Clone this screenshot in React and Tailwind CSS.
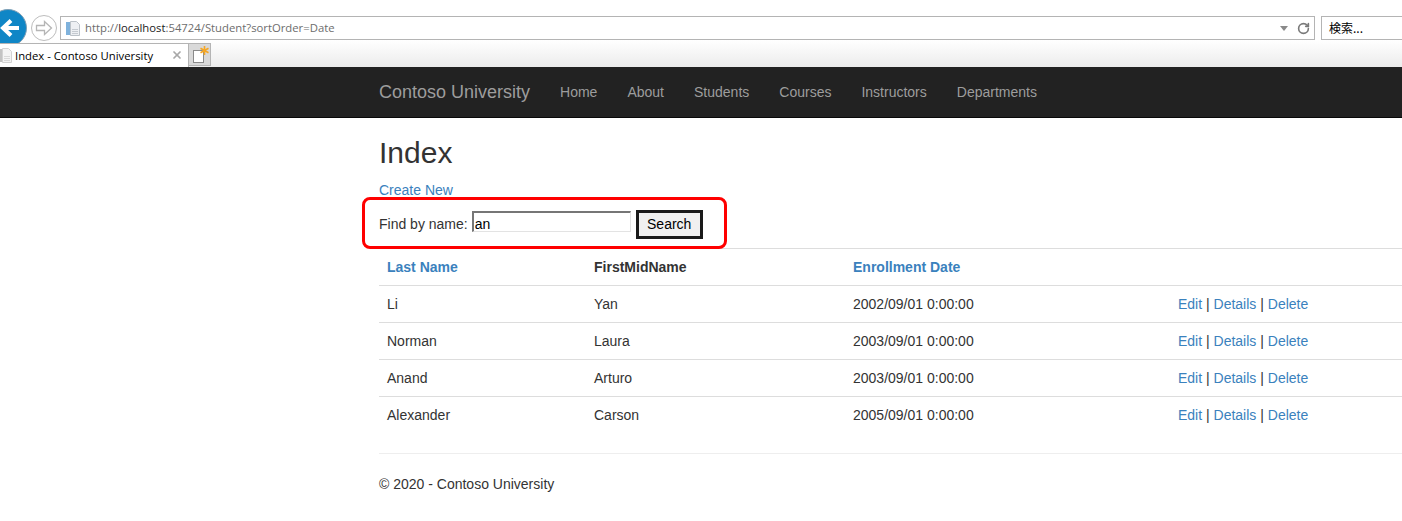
import React from 'react';
import { RotateCw, X } from 'lucide-react';

const students = [
  { last: 'Li', first: 'Yan', date: '2002/09/01 0:00:00' },
  { last: 'Norman', first: 'Laura', date: '2003/09/01 0:00:00' },
  { last: 'Anand', first: 'Arturo', date: '2003/09/01 0:00:00' },
  { last: 'Alexander', first: 'Carson', date: '2005/09/01 0:00:00' },
];

const navItems = ['Home', 'About', 'Students', 'Courses', 'Instructors', 'Departments'];

const PageIcon = ({ className }) => (
  <svg className={className} width="16" height="17" viewBox="0 0 16 17">
    <rect x="1" y="2" width="6" height="13" fill="#7fb2dc" />
    <path d="M5.5 1.5h6l3 3v11h-9z" fill="#eef0f3" stroke="#bcc2c8" />
    <path d="M7 9.5h6M7 11.5h6M7 13.5h6" stroke="#c5cad0" />
  </svg>
);

const Chrome = () => (
  <div className="h-[67px] bg-gradient-to-b from-white from-60% to-[#ececec] relative overflow-hidden">
    <div className="flex items-start h-[43px] pt-[16px]">
      <div className="relative w-[60px] h-6 shrink-0">
        <div className="absolute left-[-11px] top-[-7px] w-[38px] h-[38px] rounded-full bg-[#0f86c6] border border-[#7f9fb5]" />
        <svg className="absolute left-0 top-[2px]" width="20" height="20" viewBox="0 0 20 20" fill="none">
          <path d="M19 10H3M11 2.5 3 10l8 7.5" stroke="#ffffff" strokeWidth="4" />
        </svg>
        <div className="absolute left-[31px] top-[-1px] w-[26px] h-[26px] rounded-full bg-white border border-[#bdbdbd] flex items-center justify-center">
          <svg width="18" height="18" viewBox="0 0 18 18">
            <path d="M1.5 6.5h8V2.5l7 6.5-7 6.5v-4h-8z" fill="#ffffff" stroke="#b5b5b5" strokeWidth="1.3" />
          </svg>
        </div>
      </div>
      <div className="w-[1255px] h-6 border border-[#b4b4b4] bg-white flex items-center pl-1 pr-[4px] shrink-0">
        <PageIcon className="shrink-0" />
        <span className="ml-1 mt-[1px] text-[11.3px] text-[#6d6d6d] font-['Open_Sans','Noto_Sans',sans-serif]">
          http://<span className="text-[#1a1a1a]">localhost</span>:54724/Student?sortOrder=Date
        </span>
        <span className="ml-auto mr-[9px] w-0 h-0 border-x-[4px] border-x-transparent border-t-[5px] border-t-[#8a8a8a]" />
        <RotateCw size={13} strokeWidth={3} className="text-[#7a7a7a]" />
      </div>
      <div className="ml-[6px] flex-1 h-6 border border-[#b4b4b4] border-r-0 bg-white flex items-center pl-[7px] text-[12px] text-black font-['Noto_Sans_CJK_JP',sans-serif]">
        検索...
      </div>
    </div>
    <div className="flex h-[24px] relative">
      <div className="w-[189px] h-[24px] bg-white border border-l-0 border-[#b4b4b4] border-b-0 flex items-center relative">
        <PageIcon className="absolute left-[-3px] top-[3px] grayscale opacity-70" />
        <span className="ml-[15px] mt-[1px] text-[11.3px] text-black font-['Open_Sans','Noto_Sans',sans-serif]">Index - Contoso University</span>
        <X size={12} strokeWidth={3.5} className="text-[#a8a8a8] ml-auto mr-[5px] mb-[2px]" />
      </div>
      <div className="w-[22px] h-[23px] bg-[#d9d9d9] border border-[#b4b4b4] border-l-0 relative">
        <div className="absolute left-[4px] top-[6px] w-[11px] h-[13px] bg-white border border-[#8a8a8a]" />
        <svg className="absolute left-[11px] top-[2px]" width="9" height="9" viewBox="0 0 9 9">
          <path d="M4.5 0v9M0.5 2.2l8 4.6M8.5 2.2l-8 4.6" stroke="#f5a623" strokeWidth="1.6" />
        </svg>
      </div>
    </div>
  </div>
);

const Navbar = () => (
  <nav className="h-[51px] bg-[#222222] border-b border-[#080808] flex pl-[379px]">
    <a className="text-[18px] leading-[50px] text-[#9d9d9d] mr-[15px]">Contoso University</a>
    {navItems.map((item) => (
      <a key={item} className="px-[15px] text-[14px] leading-[50px] text-[#9d9d9d]">{item}</a>
    ))}
  </nav>
);

const LinkCell = ({ children }) => <a className="text-[#3a81bd]">{children}</a>;

const StudentTable = () => (
  <table className="w-[1110px] table-fixed border-collapse text-[14px] leading-[20px] text-[#333333]">
    <colgroup>
      <col className="w-[207px]" />
      <col className="w-[259px]" />
      <col className="w-[325px]" />
      <col />
    </colgroup>
    <thead>
      <tr className="h-[37px] border-t border-[#dddddd]">
        <th className="px-2 text-left font-bold"><LinkCell>Last Name</LinkCell></th>
        <th className="px-2 text-left font-bold">FirstMidName</th>
        <th className="px-2 text-left font-bold"><LinkCell>Enrollment Date</LinkCell></th>
        <th />
      </tr>
    </thead>
    <tbody>
      {students.map((s) => (
        <tr key={s.last} className="h-[37px] border-t border-[#dddddd]">
          <td className="px-2">{s.last}</td>
          <td className="px-2">{s.first}</td>
          <td className="px-2">{s.date}</td>
          <td className="px-2">
            <LinkCell>Edit</LinkCell> | <LinkCell>Details</LinkCell> | <LinkCell>Delete</LinkCell>
          </td>
        </tr>
      ))}
    </tbody>
  </table>
);

export default function App() {
  return (
    <div className="relative w-[1402px] h-[521px] overflow-hidden bg-white font-['Liberation_Sans',Arial,sans-serif]">
      <Chrome />
      <Navbar />
      <main className="pl-[379px] w-[1489px]">
        <h2 className="mt-[18px] mb-[10px] text-[30px] leading-[33px] font-medium text-[#333333]">Index</h2>
        <p className="text-[14px] leading-[20px] mb-[10px] mt-[11px]"><LinkCell>Create New</LinkCell></p>
        <form className="flex items-center h-[32px] mb-[8px] mt-[-2px] text-[14px] text-[#333333]">
          <span>Find by name:</span>
          <div className="ml-[4px] mb-[6px] w-[159px] h-[21px] border border-t-2 border-l-2 border-[#767676] border-r-[#e3e3e3] border-b-[#e3e3e3] text-black leading-[22px] pl-[1px]">an</div>
          <button type="button" className="ml-[5px] w-[67px] h-[29px] bg-[#f0f0f0] border-[3px] border-[#1a1a1a] text-black">Search</button>
        </form>
        <StudentTable />
        <hr className="mt-[19px] border-[#eeeeee] w-[1110px]" />
        <footer className="mt-[20px] text-[14px] leading-[20px] text-[#333333]">© 2020 - Contoso University</footer>
      </main>
      <div className="absolute left-[362px] top-[197px] w-[365px] h-[52px] border-[3px] border-[#ff0000] rounded-[8px] pointer-events-none" />
    </div>
  );
}
